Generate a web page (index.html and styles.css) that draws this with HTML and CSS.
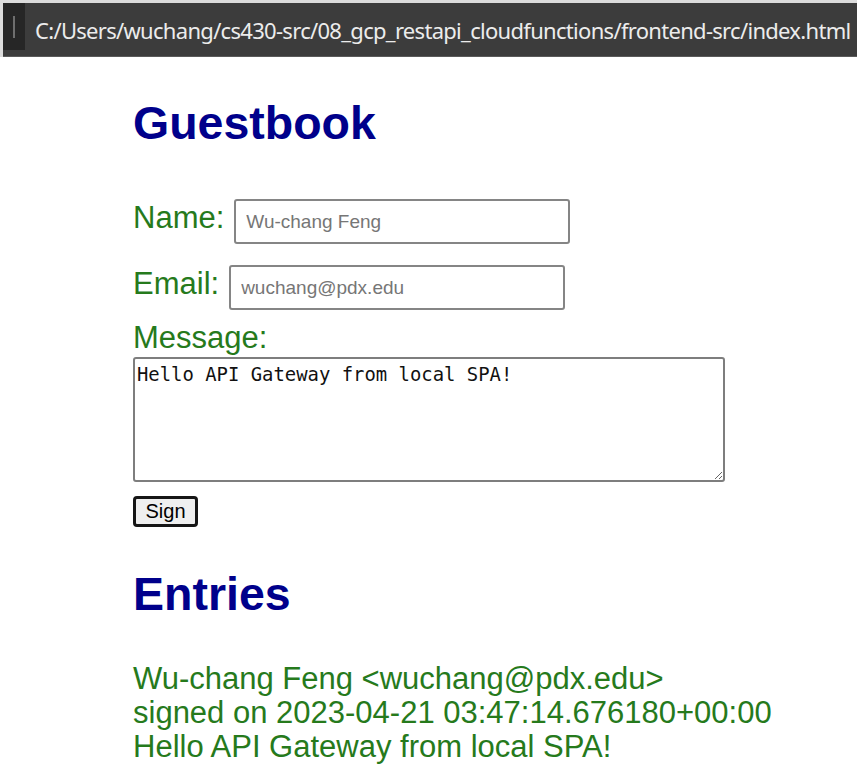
FILE: index.html
```html
<!DOCTYPE html>
<html lang="en">
<head>
<meta charset="utf-8">
<title>Guestbook</title>
<link rel="stylesheet" href="styles.css">
</head>
<body>
<div class="chrome">
  <div class="bar">
    <div class="gutter"><span class="tick"></span></div>
    <div class="url">C:/Users/wuchang/cs430-src/08_gcp_restapi_cloudfunctions/frontend-src/index.html</div>
  </div>
</div>
<main class="page">
  <h1 class="title">Guestbook</h1>
  <form class="form">
    <div class="row">
      <label class="lbl" for="name">Name:</label>
      <input id="name" class="field" type="text" placeholder="Wu-chang Feng">
    </div>
    <div class="row row-email">
      <label class="lbl" for="email">Email:</label>
      <input id="email" class="field" type="text" placeholder="wuchang@pdx.edu">
    </div>
    <label class="lbl msg-lbl" for="message">Message:</label>
    <textarea id="message" class="msg">Hello API Gateway from local SPA!</textarea>
    <button type="button" class="btn">Sign</button>
  </form>
  <h2 class="title entries-title">Entries</h2>
  <div class="entry">
    <div>Wu-chang Feng &lt;wuchang@pdx.edu&gt;</div>
    <div>signed on 2023-04-21 03:47:14.676180+00:00</div>
    <div>Hello API Gateway from local SPA!</div>
  </div>
</main>
</body>
</html>
```
FILE: styles.css
```css
html, body {
  margin: 0;
  padding: 0;
  background: #ffffff;
}

body {
  font-family: "Liberation Sans", Arial, sans-serif;
}

.chrome {
  background: #dcdcdc;
  padding: 3px 0 0 3px;
}

.bar {
  height: 54px;
  background: #3c3c3c;
  display: flex;
  align-items: flex-start;
  border-bottom: 1px solid #5a5a5a;
  box-sizing: border-box;
}

.gutter {
  width: 22px;
  height: 47px;
  background: #262626;
  display: flex;
  justify-content: center;
  align-items: center;
}

.tick {
  display: block;
  width: 2px;
  height: 22px;
  background: #6e6e6e;
}

.url {
  padding-left: 10px;
  padding-top: 15px;
  color: #ececec;
  font-family: "Noto Sans", "Open Sans", sans-serif;
  font-size: 22px;
  letter-spacing: -0.7px;
  line-height: 24px;
  white-space: nowrap;
}

.page {
  padding-left: 133px;
}

.title {
  font-size: 46.5px;
  font-weight: bold;
  color: #00008b;
  line-height: 54px;
  margin: 39px 0 0;
}

.form {
  margin-top: 49px;
}

.row {
  display: flex;
  align-items: baseline;
  gap: 10px;
}

.row-email {
  margin-top: 21px;
}

.lbl {
  font-size: 31px;
  line-height: 36px;
  color: #267a1c;
}

.field {
  width: 336px;
  height: 45px;
  box-sizing: border-box;
  border: 2px solid #858585;
  border-radius: 3px;
  padding: 0 10px;
  font-family: "Liberation Sans", Arial, sans-serif;
  font-size: 19px;
  color: #222;
  background: #fff;
}

.field::placeholder {
  color: #767676;
}

.msg-lbl {
  display: block;
  margin-top: 10px;
}

.msg {
  display: block;
  margin-top: 1px;
  width: 592px;
  height: 125px;
  box-sizing: border-box;
  border: 2px solid #7e7e7e;
  border-radius: 3px;
  padding: 4px 2px;
  font-family: "DejaVu Sans Mono", monospace;
  font-size: 18.9px;
  color: #111;
  background: #fff;
}

.btn {
  display: block;
  margin-top: 14px;
  width: 65px;
  height: 31px;
  box-sizing: border-box;
  border: 3px solid #161616;
  border-radius: 4px;
  background: #efefef;
  padding: 0;
  font-family: "Liberation Sans", Arial, sans-serif;
  font-size: 20px;
  color: #000;
}

.entries-title {
  margin-top: 40px;
}

.entry {
  margin-top: 41px;
  font-size: 31px;
  line-height: 34px;
  color: #267a1c;
}
```
